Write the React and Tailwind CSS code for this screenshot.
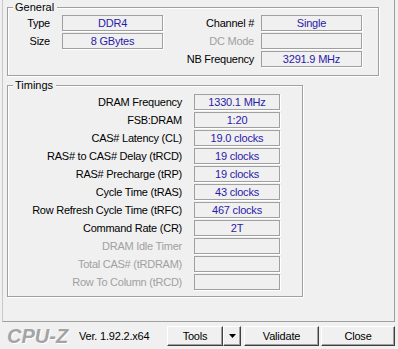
const font = "font-['Tahoma','Liberation_Sans',sans-serif]";

const timings = [
  ['DRAM Frequency', '1330.1 MHz'],
  ['FSB:DRAM', '1:20'],
  ['CAS# Latency (CL)', '19.0 clocks'],
  ['RAS# to CAS# Delay (tRCD)', '19 clocks'],
  ['RAS# Precharge (tRP)', '19 clocks'],
  ['Cycle Time (tRAS)', '43 clocks'],
  ['Row Refresh Cycle Time (tRFC)', '467 clocks'],
  ['Command Rate (CR)', '2T'],
  ['DRAM Idle Timer', ''],
  ['Total CAS# (tRDRAM)', ''],
  ['Row To Column (tRCD)', ''],
];

function ValueBox({ value, width }) {
  return (
    <div
      className={`${width} h-[16px] border border-[#a0a0a0] shadow-[1px_1px_0_#fff] text-center text-[11px] leading-[14px] tracking-[-0.2px] text-[#2a1aa8] whitespace-nowrap`}
    >
      {value}
    </div>
  );
}

function Label({ text, disabled, width }) {
  return (
    <div
      className={`${width} text-right text-[11px] leading-[16px] tracking-[-0.25px] whitespace-nowrap ${
        disabled ? 'text-[#a0a0a0]' : 'text-black'
      }`}
    >
      {text}
    </div>
  );
}

function Group({ title, className, children }) {
  return (
    <fieldset
      className={`border border-[#a0a0a0] shadow-[inset_1px_1px_0_#fff,1px_1px_0_#fff] ${className}`}
    >
      <legend className="ml-[5px] pl-[2px] pr-[3px] text-[11px] leading-[13px] bg-[#f0f0f0] text-black">
        {title}
      </legend>
      {children}
    </fieldset>
  );
}

function Button({ children, className }) {
  return (
    <div
      className={`h-[20px] flex items-center justify-center bg-[#f0f0f0] border border-t-white border-l-white border-r-[#404040] border-b-[#404040] shadow-[inset_-1px_-1px_0_#a0a0a0] text-[11px] tracking-[-0.2px] text-black ${className}`}
    >
      {children}
    </div>
  );
}

export default function App() {
  return (
    <div className={`w-[398px] h-[349px] bg-[#f0f0f0] overflow-hidden ${font}`}>
      {/* tab page */}
      <div className="ml-[2px] w-[393px] h-[322px] border-l border-r border-b border-l-[#c8c8c8] border-r-[#a0a0a0] border-b-[#a0a0a0] pl-[4px] pt-[1px]">
        <Group title="General" className="w-[372px] h-[75px] pt-[1px]">
          <div className="flex">
            <div className="flex flex-col gap-[2px]">
              <div className="flex items-center gap-[12px]">
                <Label text="Type" width="w-[42px]" />
                <ValueBox value="DDR4" width="w-[101px]" />
              </div>
              <div className="flex items-center gap-[12px]">
                <Label text="Size" width="w-[42px]" />
                <ValueBox value="8 GBytes" width="w-[101px]" />
              </div>
            </div>
            <div className="flex flex-col gap-[2px]">
              <div className="flex items-center gap-[7px]">
                <Label text="Channel #" width="w-[91px]" />
                <ValueBox value="Single" width="w-[101px]" />
              </div>
              <div className="flex items-center gap-[7px]">
                <Label text="DC Mode" disabled width="w-[91px]" />
                <ValueBox value="" width="w-[101px]" />
              </div>
              <div className="flex items-center gap-[7px]">
                <Label text="NB Frequency" width="w-[91px]" />
                <ValueBox value="3291.9 MHz" width="w-[101px]" />
              </div>
            </div>
          </div>
        </Group>

        <Group title="Timings" className="mt-[3px] w-[296px] h-[218px] pt-[2px]">
          <div className="flex flex-col gap-[2px]">
            {timings.map(([label, value]) => (
              <div key={label} className="flex items-center gap-[12px]">
                <Label text={label} disabled={!value} width="w-[174px]" />
                <ValueBox value={value} width="w-[86px]" />
              </div>
            ))}
          </div>
        </Group>
      </div>

      {/* bottom bar */}
      <div className="flex items-center pt-[4px] pl-[7px]">
        <div className="w-[72px] text-[20px] leading-[20px] font-bold italic text-[#a4a4a4] font-['Liberation_Sans',sans-serif] [text-shadow:1px_1px_0_#fff]">
          CPU-Z
        </div>
        <div className="w-[88px] text-[11px] tracking-[-0.2px] text-black whitespace-nowrap">Ver. 1.92.2.x64</div>
        <Button className="w-[56px]">Tools</Button>
        <Button className="w-[18px]">
          <svg width="7" height="4" viewBox="0 0 7 4">
            <path d="M0 0h7L3.5 4z" fill="#000" />
          </svg>
        </Button>
        <Button className="ml-[3px] w-[75px]">Validate</Button>
        <Button className="ml-[2px] w-[74px]">Close</Button>
      </div>
    </div>
  );
}
